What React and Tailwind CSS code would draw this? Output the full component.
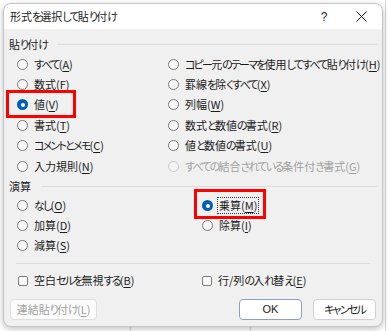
import React from 'react'

const FONT = "font-['Noto_Sans_CJK_JP','Noto_Sans',sans-serif] [font-feature-settings:'palt'_1]"

const PASTE_LEFT = [
  { t: 'すべて', k: 'A' },
  { t: '数式', k: 'F' },
  { t: '値', k: 'V', checked: true },
  { t: '書式', k: 'T' },
  { t: 'コメントとメモ', k: 'C' },
  { t: '入力規則', k: 'N' },
]

const PASTE_RIGHT = [
  { t: 'コピー元のテーマを使用してすべて貼り付け', k: 'H' },
  { t: '罫線を除くすべて', k: 'X' },
  { t: '列幅', k: 'W' },
  { t: '数式と数値の書式', k: 'R' },
  { t: '値と数値の書式', k: 'U' },
  { t: 'すべての結合されている条件付き書式', k: 'G', disabled: true },
]

const OP_LEFT = [
  { t: 'なし', k: 'O' },
  { t: '加算', k: 'D' },
  { t: '減算', k: 'S' },
]

const OP_RIGHT = [
  { t: '乗算', k: 'M', checked: true, focus: true },
  { t: '除算', k: 'I' },
]

// kana in the UI font are much narrower than kanji, so tighten kana runs only
function Jp({ children }) {
  return children.split(/([\u3040-\u30ff]+)/).map((part, i) =>
    /[\u3040-\u30ff]/.test(part)
      ? <span key={i} className="tracking-[-1.8px]">{part}</span>
      : <span key={i}>{part}</span>
  )
}

function Label({ t, k }) {
  return (
    <>
      <Jp>{t}</Jp>(<span className="underline underline-offset-2">{k}</span>)
    </>
  )
}

function Radio({ item, h = 'h-[20.4px]' }) {
  const { checked, disabled, focus } = item
  return (
    <div className={`flex items-center gap-[6px] ${h}`}>
      {checked ? (
        <span className="w-[11px] h-[11px] rounded-full bg-[#005fb8] flex items-center justify-center shrink-0">
          <span className="w-[4px] h-[4px] rounded-full bg-white" />
        </span>
      ) : (
        <span className={`w-[11px] h-[11px] rounded-full border shrink-0 ${disabled ? 'border-[#c8c8c8] bg-[#f5f5f5]' : 'border-[#7a7a7a] bg-[#f7f7f7]'}`} />
      )}
      <span className={`whitespace-nowrap leading-none ${disabled ? 'text-[#a0a0a0]' : 'text-[#1b1b1b]'} ${focus ? 'border border-dotted border-[#333] px-[1px] py-[2px] -ml-[2px]' : ''}`}>
        <Label t={item.t} k={item.k} />
      </span>
    </div>
  )
}

function Check({ t, k }) {
  return (
    <div className="flex items-center gap-[6px] h-[20px]">
      <span className="w-[10px] h-[10px] rounded-[2px] border border-[#7a7a7a] bg-[#f7f7f7] shrink-0" />
      <span className="whitespace-nowrap leading-none text-[#1b1b1b]">
        <Label t={t} k={k} />
      </span>
    </div>
  )
}

export default function App() {
  return (
    <div className={`relative w-[389px] h-[331px] bg-white overflow-hidden text-[11px] ${FONT}`}>
      {/* sheet gridlines behind */}
      <div className="absolute right-[3px] top-0 bottom-0 w-px bg-[#d4d4d4]" />
      <div className="absolute left-[130px] bottom-0 h-[6px] w-px bg-[#d4d4d4]" />
      <div className="absolute left-[250px] bottom-0 h-[6px] w-px bg-[#d4d4d4]" />

      <div className="pt-[3px] pl-[3px]">
        <div className="relative w-[380px] h-[324px] rounded-[8px] bg-[#f0f0f0] border border-[#c4c4c4] shadow-[0_2px_6px_rgba(0,0,0,0.25)] overflow-hidden flex flex-col">
          {/* title bar */}
          <div className="h-[25px] bg-white flex items-center pl-[6px] pr-[14px] shrink-0">
            <span className="text-[#1b1b1b] flex-1"><Jp>形式を選択して貼り付け</Jp></span>
            <span className="text-[#1b1b1b] text-[12px] w-[12px] text-center mr-[26px] font-['Liberation_Sans',sans-serif]">?</span>
            <svg width="11" height="11" viewBox="0 0 11 11" className="mr-[1px]">
              <path d="M0.5 0.5 L10.5 10.5 M10.5 0.5 L0.5 10.5" stroke="#1b1b1b" strokeWidth="1" />
            </svg>
          </div>

          {/* body */}
          <div className="flex-1 pt-[5px] flex flex-col">
            <div className="flex items-center h-[20px] pl-[5px] pr-[5px]">
              <span className="text-[#1b1b1b] whitespace-nowrap"><Jp>貼り付け</Jp></span>
              <span className="flex-1 h-px bg-[#dcdcdc] ml-[10px]" />
            </div>
            <div className="grid grid-cols-[151px_1fr] pl-[13px]">
              <div className="flex flex-col">
                {PASTE_LEFT.map(it => <Radio key={it.k} item={it} />)}
              </div>
              <div className="flex flex-col">
                {PASTE_RIGHT.map(it => <Radio key={it.k} item={it} />)}
              </div>
            </div>

            <div className="h-[19.6px] flex items-center pl-[5px] pr-[5px]">
              <span className="text-[#1b1b1b]">演算</span>
              <span className="flex-1 h-px bg-[#dcdcdc] ml-[10px]" />
            </div>
            <div className="grid grid-cols-[185px_1fr] pl-[13px]">
              <div className="flex flex-col">
                {OP_LEFT.map(it => <Radio key={it.k} item={it} h="h-[20px]" />)}
              </div>
              <div className="flex flex-col">
                {OP_RIGHT.map(it => <Radio key={it.k} item={it} h="h-[20px]" />)}
              </div>
            </div>

            <div className="mt-[7px] mx-[12px] h-px bg-[#dcdcdc]" />

            <div className="grid grid-cols-[184px_1fr] pl-[14px] mt-[7px]">
              <Check t="空白セルを無視する" k="B" />
              <Check t="行/列の入れ替え" k="E" />
            </div>

            <div className="flex items-center mt-[8px] px-[6px]">
              <button className="w-[87px] h-[21px] rounded-[4px] border border-[#dedede] bg-[#fbfbfb] text-[#a0a0a0]">
                <Label t="連結貼り付け" k="L" />
              </button>
              <div className="flex-1" />
              <button className="w-[63px] h-[21px] rounded-[4px] border border-[#8aa0c0] bg-white text-[#1b1b1b] font-['Liberation_Sans',sans-serif]">
                OK
              </button>
              <button className="w-[63px] h-[21px] rounded-[4px] border border-[#d0d0d0] bg-white text-[#1b1b1b] ml-[11px]">
                <Jp>キャンセル</Jp>
              </button>
            </div>
          </div>

          {/* highlight boxes */}
          <div className="absolute left-[2px] top-[86px] w-[70px] h-[28px] border-[3px] border-[#ff0000]" />
          <div className="absolute left-[190px] top-[185px] w-[72px] h-[30px] border-[3px] border-[#ff0000]" />
        </div>
      </div>
    </div>
  )
}
